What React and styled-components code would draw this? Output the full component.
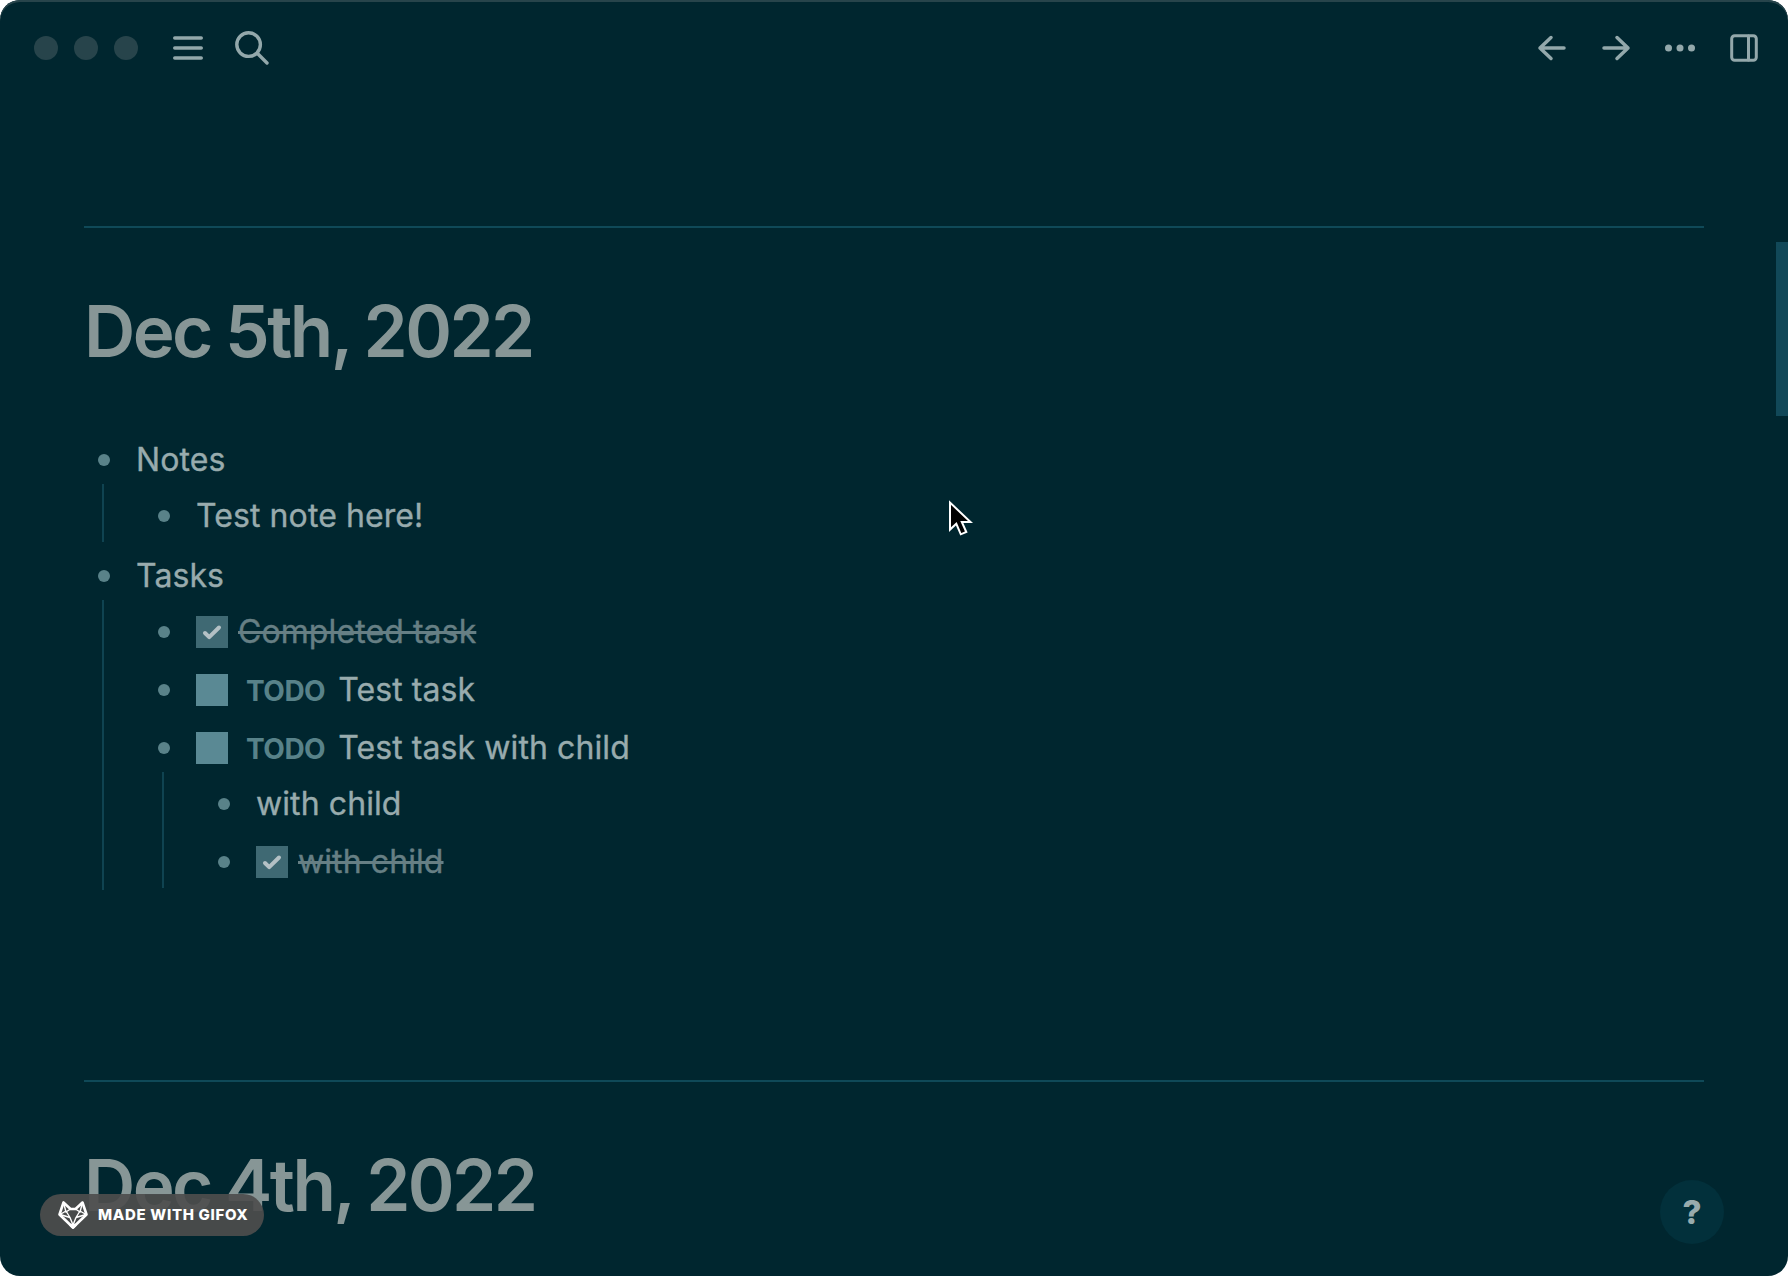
import React from "react";
import styled, { createGlobalStyle } from "styled-components";

const Global = createGlobalStyle`
  * { box-sizing: border-box; }
  body { margin: 0; background: #fff; }
`;

const Window = styled.div`
  position: relative;
  width: 1788px;
  height: 1276px;
  overflow: hidden;
  border-radius: 20px;
  background: #00262f;
  box-shadow: inset 0 2px 0 #27444b;
  color: #93a8ab;
  font-family: Inter, "Liberation Sans", sans-serif;
  font-size: 32px;
`;

const Toolbar = styled.header`
  display: flex;
  align-items: center;
  height: 96px;
  padding: 0 28px 0 34px;
`;

const Lights = styled.div`
  display: flex;
  gap: 16px;
  margin-right: 35px;
`;

const Light = styled.span`
  width: 24px;
  height: 24px;
  border-radius: 50%;
  background: #27444b;
`;

const Tools = styled.nav`
  display: flex;
  align-items: center;
  gap: 32px;
  margin-left: ${(p) => (p.$end ? "auto" : 0)};
`;

const Icon = styled.svg`
  display: block;
  flex: none;
  fill: ${(p) => (p.$solid ? p.$color || "#93a8ab" : "none")};
  stroke: ${(p) => (p.$solid ? "none" : p.$color || "#93a8ab")};
  stroke-linecap: round;
  stroke-linejoin: round;
`;

const Page = styled.main`
  padding: 130px 84px 0;
`;

const Day = styled.section`
  height: 854px;
  border-top: 2px solid #0f4958;
  padding-top: 60px;
`;

const Title = styled.h1`
  margin: 0 0 61px;
  height: 87px;
  line-height: 87px;
  font-size: 71px;
  font-weight: 600;
  letter-spacing: -2.6px;
  word-spacing: -1px;
  color: #879696;
  white-space: nowrap;
`;

const List = styled.ul`
  display: flex;
  flex-direction: column;
  gap: 10px;
  list-style: none;
  margin: 0;
  padding: 0 0 0 14px;
`;

const Children = styled.ul`
  display: flow-root;
  list-style: none;
  margin: ${(p) => (p.$nested ? "-2px 0 2px 4px" : "0 0 0 4px")};
  padding: 0 0 0 54px;
  border-left: 2px solid #0f4351;
`;

const Row = styled.div`
  display: flex;
  align-items: center;
  height: ${(p) => (p.$top ? 48 : 58)}px;
  padding-top: ${(p) => (p.$top ? 0 : 6)}px;
  white-space: nowrap;
`;

const Bullet = styled.span`
  width: 12px;
  height: 12px;
  margin-right: 26px;
  border-radius: 50%;
  background: #598289;
`;

const Box = styled.span`
  display: flex;
  align-items: center;
  justify-content: center;
  width: 32px;
  height: 32px;
  margin-right: ${(p) => (p.$done ? 10 : 18)}px;
  background: ${(p) => (p.$done ? "#3f6973" : "#5a8994")};
`;

const Marker = styled.span`
  margin-right: 13px;
  padding-top: 2px;
  font-size: 28px;
  font-weight: 700;
  letter-spacing: -0.5px;
  color: #588289;
`;

const Text = styled.span`
  padding-bottom: 2px;
  font-weight: 400;
  letter-spacing: 0.09px;
  -webkit-text-stroke: 0.35px currentColor;
  color: ${(p) => (p.$done ? "#667f84" : "#98abad")};
  text-decoration: ${(p) => (p.$done ? "line-through 2.6px" : "none")};
`;

const Scrollbar = styled.div`
  position: absolute;
  right: 0;
  top: 242px;
  width: 12px;
  height: 174px;
  background: #114858;
`;

const Help = styled.button`
  position: absolute;
  right: 64px;
  bottom: 32px;
  width: 64px;
  height: 64px;
  padding: 0;
  border: 0;
  border-radius: 50%;
  background: #02303b;
  color: #98abad;
  font: 800 33px/64px Inter, sans-serif;
`;

const Badge = styled.div`
  position: absolute;
  left: 40px;
  top: 1194px;
  display: flex;
  align-items: center;
  width: 224px;
  height: 42px;
  padding-left: 18px;
  border-radius: 21px;
  background: rgba(77, 77, 77, 0.92);
  color: #fff;
  font: 800 15px/42px Inter, sans-serif;
  letter-spacing: 0.68px;
  white-space: nowrap;
`;

const BadgeText = styled.span`
  margin-left: 10px;
`;

const Pointer = styled.svg`
  position: absolute;
  left: 948px;
  top: 499px;
`;

function Task({ done, children }) {
  return (
    <Row>
      <Bullet />
      <Box $done={done}>
        {done && (
          <Icon $color="#b4c1c5" width="32" height="32" viewBox="0 0 32 32" strokeWidth="4">
            <path d="M9 17l4.200 4.200L23 11.500" />
          </Icon>
        )}
      </Box>
      {!done && <Marker>TODO</Marker>}
      <Text $done={done}>{children}</Text>
    </Row>
  );
}

function Note({ children, top }) {
  return (
    <Row $top={top}>
      <Bullet />
      <Text>{children}</Text>
    </Row>
  );
}

export default function App() {
  return (
    <>
      <Global />
      <Window>
        <Toolbar>
          <Lights>
            <Light />
            <Light />
            <Light />
          </Lights>
          <Tools>
            <Icon width="30" height="30" viewBox="0 0 30 30" strokeWidth="3.600">
              <path d="M1.800 5h26.400M1.800 15h26.400M1.800 25h26.400" />
            </Icon>
            <Icon width="34" height="34" viewBox="0 0 34 34" strokeWidth="3.400">
              <circle cx="13.600" cy="13.600" r="11.800" />
              <path d="M22.300 22.300L32 32" />
            </Icon>
          </Tools>
          <Tools $end>
            <Icon width="32" height="28" viewBox="0 0 32 28" strokeWidth="3.500">
              <path d="M28 14H4M15 3.500L4 14l11 10.500" />
            </Icon>
            <Icon width="32" height="28" viewBox="0 0 32 28" strokeWidth="3.500">
              <path d="M4 14h24M17 3.500L28 14 17 24.500" />
            </Icon>
            <Icon $solid width="32" height="28" viewBox="0 0 32 28">
              <circle cx="4.500" cy="14" r="3.500" />
              <circle cx="16" cy="14" r="3.500" />
              <circle cx="27.500" cy="14" r="3.500" />
            </Icon>
            <Icon width="32" height="28" viewBox="0 0 32 28" strokeWidth="3">
              <rect x="3.700" y="1.700" width="24.600" height="24.600" rx="3" />
              <path d="M20.500 2v24" />
            </Icon>
          </Tools>
        </Toolbar>
        <Page>
          <Day>
            <Title>Dec 5th, 2022</Title>
            <List>
              <li>
                <Note top>Notes</Note>
                <Children>
                  <li><Note>Test note here!</Note></li>
                </Children>
              </li>
              <li>
                <Note top>Tasks</Note>
                <Children>
                  <li><Task done>Completed task</Task></li>
                  <li><Task>Test task</Task></li>
                  <li>
                    <Task>Test task with child</Task>
                    <Children $nested>
                      <li><Note>with child</Note></li>
                      <li><Task done>with child</Task></li>
                    </Children>
                  </li>
                </Children>
              </li>
            </List>
          </Day>
          <Day>
            <Title>Dec 4th, 2022</Title>
          </Day>
        </Page>
        <Scrollbar />
        <Pointer width="26" height="40" viewBox="0 0 26 40">
          <path d="M2 3.600V30.600l6.300-5.800 4.500 10.500 5.500-2.300-4.500-10H22.500z" fill="#000" stroke="#fff" strokeWidth="2" />
        </Pointer>
        <Badge>
          <Icon $color="#fff" width="30" height="30" viewBox="0 0 30 30" strokeWidth="2.600">
            <path d="M5.500 2.500L1.500 14.500 15 27.500l13.500-13-4-12-7 6.500h-5z" />
            <path d="M5.500 2.500L8 12l4.500-3M24.500 2.500L22 12l-4.500-3M8 11l-6 3.500 10 3zM22 11l6 3.500-10 3zM12 17.500L15 25l3-7.500" strokeWidth="1.400" />
            <path d="M12.500 25L15 27.500l2.500-2.500z" fill="#fff" />
          </Icon>
          <BadgeText>MADE WITH GIFOX</BadgeText>
        </Badge>
        <Help>?</Help>
      </Window>
    </>
  );
}
